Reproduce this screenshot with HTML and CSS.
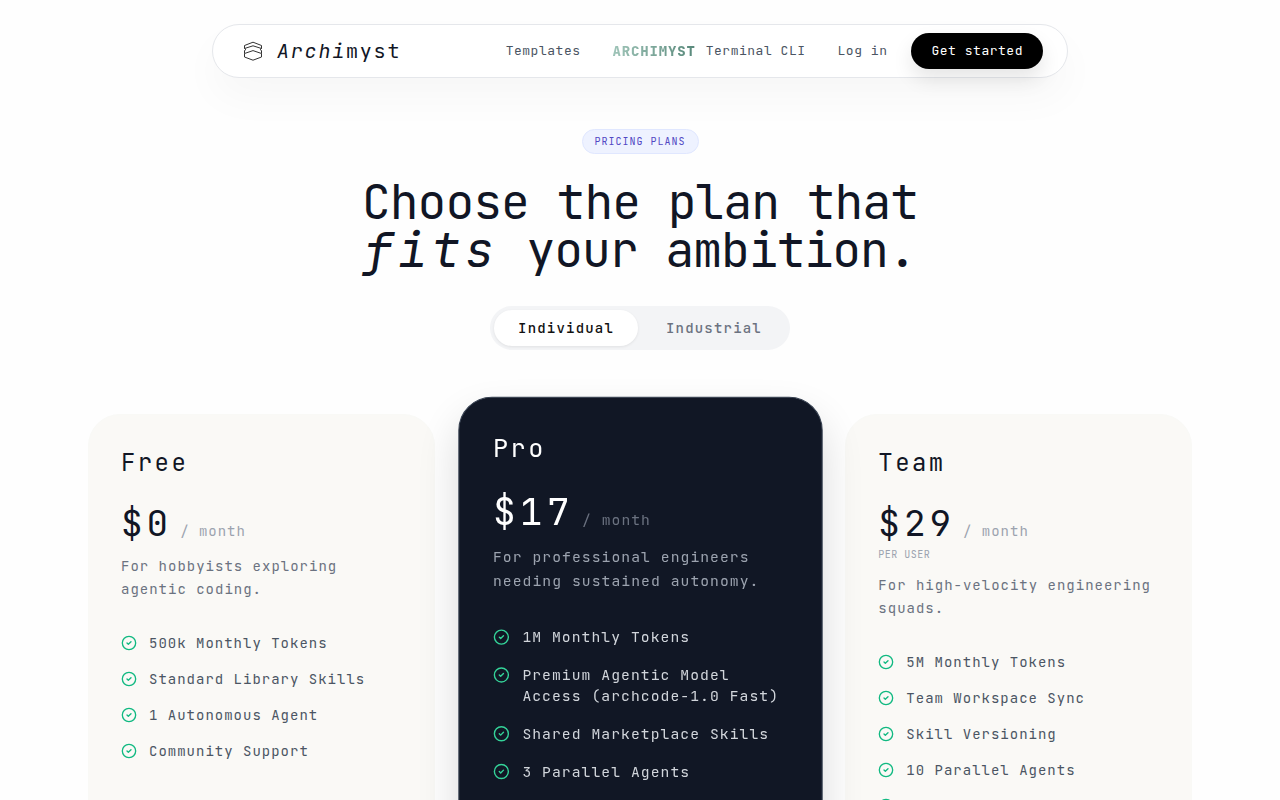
FILE: index.html
```html
<!DOCTYPE html>
<html lang="en">
<head>
<meta charset="utf-8">
<meta name="viewport" content="width=device-width, initial-scale=1">
<title>Archimyst Pricing</title>
<link rel="stylesheet" href="styles.css">
</head>
<body>
<svg class="sprite" aria-hidden="true">
  <symbol id="check" viewBox="0 0 24 24"><circle cx="12" cy="12" r="10"/><path d="m9 12 2 2 4-4"/></symbol>
</svg>
<header class="navbar">
  <a class="brand" href="#">
    <svg class="brand-icon" viewBox="0 0 20 20" aria-hidden="true">
      <path d="M1.500 4.500 10 1.200l8.500 3.300v2.500L10 10 1.500 7z" stroke="none"/>
      <path d="M1.500 7.500v-3L10 1.200l8.500 3.300v3L10 4.800z"/>
      <path d="M1.500 7.500 3 8.500l-1.500 1v3L10 9.600l8.500 2.900v-3L17 8.500l1.500-1"/>
      <path d="M1.500 12.500v3.500L10 19.200l8.500-3.200v-3.500"/>
    </svg>
    <span class="brand-name"><em>Archi</em>myst</span>
  </a>
  <nav class="links">
    <a href="#">Templates</a>
    <a class="cli" href="#"><span class="wordmark">ARCHIMYST</span>Terminal CLI</a>
    <a href="#">Log in</a>
  </nav>
  <button class="cta" type="button">Get started</button>
</header>
<main class="page">
  <span class="badge">Pricing plans</span>
  <h1 class="headline">Choose the plan that<br><em>fits</em> your ambition.</h1>
  <div class="toggle">
    <button class="tab active" type="button">Individual</button>
    <button class="tab" type="button">Industrial</button>
  </div>
  <section class="plans">
    <article class="card">
      <h2 class="name">Free</h2>
      <p class="price"><span class="amount">$0</span><span class="period">/ month</span></p>
      <p class="desc">For hobbyists exploring agentic coding.</p>
      <ul class="features">
        <li><svg class="check"><use href="#check"/></svg>500k Monthly Tokens</li>
        <li><svg class="check"><use href="#check"/></svg>Standard Library Skills</li>
        <li><svg class="check"><use href="#check"/></svg>1 Autonomous Agent</li>
        <li><svg class="check"><use href="#check"/></svg>Community Support</li>
      </ul>
    </article>
    <article class="card featured">
      <h2 class="name">Pro</h2>
      <p class="price"><span class="amount">$17</span><span class="period">/ month</span></p>
      <p class="desc">For professional engineers needing sustained autonomy.</p>
      <ul class="features">
        <li><svg class="check"><use href="#check"/></svg>1M Monthly Tokens</li>
        <li><svg class="check"><use href="#check"/></svg>Premium Agentic Model Access (archcode-1.0 Fast)</li>
        <li><svg class="check"><use href="#check"/></svg>Shared Marketplace Skills</li>
        <li><svg class="check"><use href="#check"/></svg>3 Parallel Agents</li>
      </ul>
    </article>
    <article class="card">
      <h2 class="name">Team</h2>
      <p class="price"><span class="amount">$29</span><span class="period">/ month</span></p>
      <p class="unit">Per user</p>
      <p class="desc">For high-velocity engineering squads.</p>
      <ul class="features">
        <li><svg class="check"><use href="#check"/></svg>5M Monthly Tokens</li>
        <li><svg class="check"><use href="#check"/></svg>Team Workspace Sync</li>
        <li><svg class="check"><use href="#check"/></svg>Skill Versioning</li>
        <li><svg class="check"><use href="#check"/></svg>10 Parallel Agents</li>
        <li><svg class="check"><use href="#check"/></svg></li>
      </ul>
    </article>
  </section>
</main>
</body>
</html>
```
FILE: styles.css
```css
* { box-sizing: border-box; }
body {
  margin: 0;
  padding: 24px 24px 0;
  background: #fefefe;
  color: #111625;
  font-family: "JetBrains Mono", "DejaVu Sans Mono", monospace;
  font-size: 14px;
  line-height: 20px;
  letter-spacing: 1px;
}
h1, h2, p, ul { margin: 0; padding: 0; font-weight: 400; }
button { border: 0; font: inherit; letter-spacing: inherit; cursor: pointer; }
a { color: inherit; text-decoration: none; }
.sprite { display: none; }

.navbar {
  display: flex;
  align-items: center;
  max-width: 856px;
  margin: 0 auto;
  padding: 8px 24px 8px 30px;
  border: 1px solid #e5e7eb;
  border-radius: 27px;
  background: #fff;
  box-shadow: 0 20px 40px rgba(0, 0, 0, 0.03);
}
.brand { display: flex; align-items: center; gap: 14px; margin-right: auto; }
.brand-icon { width: 20px; height: 20px; fill: none; stroke: #333; stroke-width: 1; stroke-linejoin: round; }
.brand-name { font-size: 20px; line-height: 28px; letter-spacing: 0.09em; }
.links { display: flex; gap: 32px; margin-right: 24px; color: #4b5563; font-size: 13px; letter-spacing: 0.04em; }
.cli { display: flex; gap: 10px; }
.wordmark {
  font-weight: 800;
  font-size: 14px;
  letter-spacing: 0.06em;
  color: transparent;
  background: linear-gradient(90deg, #9fc4b8, #58887a);
  background-clip: text;
}
.cta {
  padding: 8px 20px;
  border-radius: 18px;
  background: #000;
  color: #fff;
  font-size: 13px;
  line-height: 20px;
  letter-spacing: 0.04em;
  box-shadow: 0 10px 20px rgba(0, 0, 0, 0.1);
}

.page {
  display: flex;
  flex-direction: column;
  align-items: center;
  max-width: 1104px;
  margin: 0 auto;
  padding-top: 51px;
}
.badge {
  padding: 4px 12px;
  border: 1px solid #e0e7ff;
  border-radius: 13px;
  background: #eef2ff;
  color: #5248c4;
  font-size: 10px;
  line-height: 15px;
  letter-spacing: 1px;
  text-transform: uppercase;
}
.headline {
  margin-top: 24px;
  font-size: 48px;
  line-height: 48px;
  letter-spacing: -1px;
  text-align: center;
}
.headline em { letter-spacing: 0.1em; }
.toggle { display: flex; gap: 4px; margin-top: 32px; padding: 4px; border-radius: 22px; background: #f3f4f6; }
.tab { padding: 8px 24px; border-radius: 18px; background: transparent; color: #6b7280; font-weight: 500; letter-spacing: 0.085em; }
.tab.active { background: #fff; color: #111; box-shadow: 0 1px 3px rgba(0, 0, 0, 0.08); }

.plans {
  display: grid;
  grid-template-columns: repeat(3, minmax(0, 1fr));
  gap: 32px;
  width: 100%;
  margin-top: 64px;
}
.card {
  padding: 32px 32px 292px;
  border: 1px solid #f9f9f6;
  border-radius: 32px;
  background: #faf9f6;
}
.featured {
  border-color: #374151;
  background: #111725;
  color: #fff;
  transform: scale(1.05);
  box-shadow: 0 20px 40px rgba(0, 0, 0, 0.14);
}
.name { font-size: 24px; line-height: 32px; letter-spacing: 0.1em; }
.price { display: flex; align-items: baseline; gap: 8px; margin-top: 24px; }
.amount { font-size: 36px; line-height: 40px; letter-spacing: 0.11em; }
.period { color: #9ca3af; }
.unit { margin-top: 4px; color: #9ca3af; font-size: 10px; line-height: 15px; letter-spacing: 0.05em; text-transform: uppercase; }
.desc { margin-top: 12px; color: #6b7280; line-height: 23px; }
.features { display: flex; flex-direction: column; gap: 16px; margin-top: 32px; list-style: none; color: #4b5563; }
.features li { display: flex; gap: 12px; }
.check {
  flex: none;
  width: 16px;
  height: 16px;
  margin-top: 2px;
  fill: none;
  stroke: #10b981;
  stroke-width: 2;
  stroke-linecap: round;
  stroke-linejoin: round;
}
.featured .period { color: #6b7280; }
.featured .desc { color: #9ca3af; }
.featured .features { color: #d1d5db; }
.featured .check { stroke: #34d399; }

@media (max-width: 900px) {
  .links { display: none; }
  .plans { grid-template-columns: 1fr; }
  .card { padding-bottom: 32px; }
  .featured { transform: none; }
}
```
